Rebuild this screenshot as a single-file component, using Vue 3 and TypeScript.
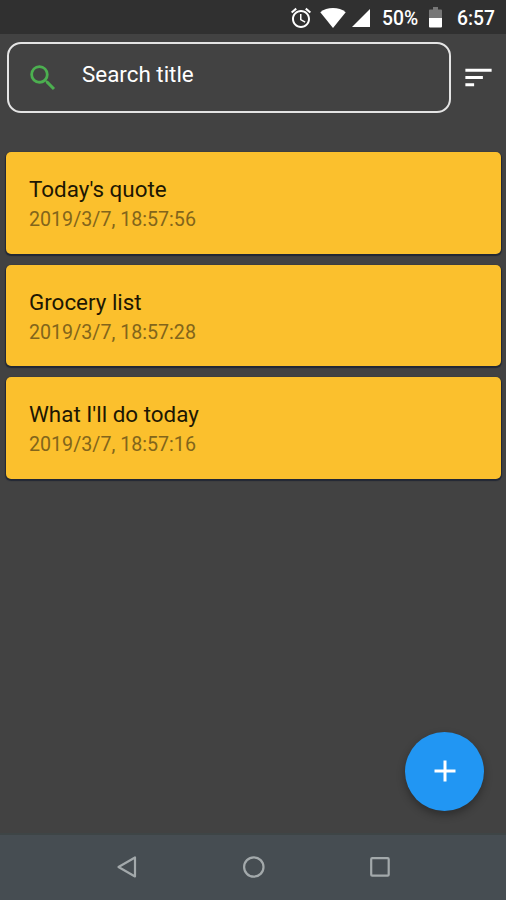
<script setup lang="ts">
interface Note {
  id: number
  title: string
  date: string
}

const notes: Note[] = [
  { id: 1, title: "Today's quote", date: '2019/3/7, 18:57:56' },
  { id: 2, title: 'Grocery list', date: '2019/3/7, 18:57:28' },
  { id: 3, title: "What I'll do today", date: '2019/3/7, 18:57:16' },
]
</script>

<template>
  <div class="screen">
    <header class="status">
      <svg class="alarm" viewBox="0 0 24 24">
        <path d="M22 5.72l-4.6-3.86-1.29 1.53 4.6 3.86L22 5.72zM7.88 3.39L6.6 1.86 2 5.71l1.29 1.53 4.59-3.85zM12.5 8H11v6l4.75 2.85.75-1.23-4-2.37V8zM12 4c-4.97 0-9 4.03-9 9s4.02 9 9 9c4.97 0 9-4.03 9-9s-4.03-9-9-9zm0 16c-3.87 0-7-3.13-7-7s3.13-7 7-7 7 3.13 7 7-3.13 7-7 7z" />
      </svg>
      <svg class="wifi" viewBox="0 0 26 20">
        <path d="M13 20L.3 4.2C3.8 1.4 8.1 0 13 0s9.2 1.4 12.7 4.2z" />
      </svg>
      <svg class="signal" viewBox="0 0 18 18"><path d="M0 18L18 0v18z" /></svg>
      <span class="percent">50%</span>
      <svg class="battery" viewBox="0 0 13 21">
        <path class="battery-empty" d="M0 3.5q0-1 1-1h3V0h5v2.500h3q1 0 1 1V11H0z" />
        <path d="M0 11h13v8.500q0 1-1 1H1q-1 0-1-1z" />
      </svg>
      <span class="clock">6:57</span>
    </header>

    <section class="toolbar">
      <label class="search">
        <svg class="search-icon" viewBox="0 0 24 24">
          <path d="M15.500 14h-.79l-.28-.27A6.471 6.471 0 0 0 16 9.500 6.500 6.500 0 1 0 9.500 16c1.610 0 3.090-.59 4.230-1.570l.27.28v.79l5 4.990L20.490 19l-4.990-5zm-6 0C7.010 14 5 11.990 5 9.500S7.010 5 9.500 5 14 7.010 14 9.500 11.990 14 9.500 14z" />
        </svg>
        <span class="placeholder">Search title</span>
      </label>
      <svg class="sort" viewBox="0 0 24 24">
        <path d="M3 18h6v-2H3v2zM3 6v2h18V6H3zm0 7h12v-2H3v2z" />
      </svg>
    </section>

    <main class="notes">
      <article v-for="note in notes" :key="note.id" class="note">
        <h2 class="title">{{ note.title }}</h2>
        <p class="date">{{ note.date }}</p>
      </article>
    </main>

    <button class="fab" aria-label="Add note">
      <svg viewBox="0 0 24 24"><path d="M19 13h-6v6h-2v-6H5v-2h6V5h2v6h6v2z" /></svg>
    </button>

    <nav class="navbar">
      <svg viewBox="0 0 24 24"><path d="M20 2.500v19L3.500 12z" /></svg>
      <svg viewBox="0 0 24 24"><circle cx="11.800" cy="12" r="9.700" /></svg>
      <svg viewBox="0 0 24 24"><rect x="3.200" y="3.200" width="17.500" height="17.500" rx="1" /></svg>
    </nav>
  </div>
</template>

<style>
body {
  margin: 0;
}
</style>

<style scoped>
.screen {
  position: relative;
  display: flex;
  flex-direction: column;
  box-sizing: border-box;
  width: 506px;
  height: 900px;
  overflow: hidden;
  background: #424242;
  color: #fff;
  font-family: Roboto, sans-serif;
}
svg {
  display: block;
  flex: none;
  fill: currentColor;
}
.status {
  display: flex;
  align-items: center;
  flex: none;
  box-sizing: border-box;
  height: 34px;
  padding: 2px 11px 0 289px;
  background: #303030;
  font-size: 19.3px;
  font-weight: 500;
  line-height: 34px;
  white-space: nowrap;
}
.alarm {
  width: 24px;
  height: 24px;
  margin-top: -1px;
}
.wifi {
  width: 26px;
  height: 20px;
  margin-left: 7px;
}
.signal {
  width: 18px;
  height: 18px;
  margin-left: 6px;
}
.percent {
  width: 37px;
  margin: 2px 0 0 12px;
}
.battery {
  width: 13px;
  height: 21px;
  margin: -1px 0 0 10px;
}
.battery-empty {
  fill: #777;
}
.clock {
  margin: 2px 0 0 auto;
}
.toolbar {
  display: flex;
  align-items: center;
  flex: none;
  height: 71px;
  margin-top: 8px;
  padding-left: 7px;
}
.search {
  display: flex;
  align-items: center;
  box-sizing: border-box;
  width: 444px;
  height: 71px;
  padding-left: 17px;
  border: 2px solid #e4e4e4;
  border-radius: 14px;
}
.search-icon {
  width: 34px;
  height: 34px;
  color: #4caf50;
}
.placeholder {
  margin: -8px 0 0 22px;
  font-size: 22.4px;
  line-height: 30px;
}
.sort {
  width: 35px;
  height: 35px;
  margin-left: 10px;
}
.notes {
  display: flex;
  flex: 1;
  flex-direction: column;
  gap: 11px;
  padding: 39px 5px 0 6px;
}
.note {
  box-sizing: border-box;
  height: 101.5px;
  padding: 23px 23px 0;
  border-radius: 5px;
  background: #fbc02d;
  box-shadow: 0 1px 1px 1px rgba(15, 25, 45, 0.65);
}
.title {
  margin: 0;
  color: #1d1703;
  font-size: 22.4px;
  font-weight: 400;
  line-height: 29px;
}
.date {
  margin: 0;
  color: #82651b;
  font-size: 19.65px;
  line-height: 31px;
}
.fab {
  position: absolute;
  right: 22px;
  bottom: 89.5px;
  display: grid;
  place-items: center;
  width: 79px;
  height: 79px;
  padding: 0;
  border: 0;
  border-radius: 50%;
  background: #2196f3;
  box-shadow: 0 4px 9px rgba(0, 0, 0, 0.32);
  color: #fff;
}
.fab svg {
  width: 36px;
  height: 36px;
}
.navbar {
  display: flex;
  justify-content: center;
  gap: 102.5px;
  flex: none;
  box-sizing: border-box;
  height: 67px;
  padding: 20px 0 0 1px;
  border-top: 2px solid #3e4546;
  background: #464d52;
}
.navbar svg {
  width: 24px;
  height: 24px;
  fill: none;
  stroke: #a3a9ab;
  stroke-width: 2.2;
  stroke-linejoin: round;
}
</style>
